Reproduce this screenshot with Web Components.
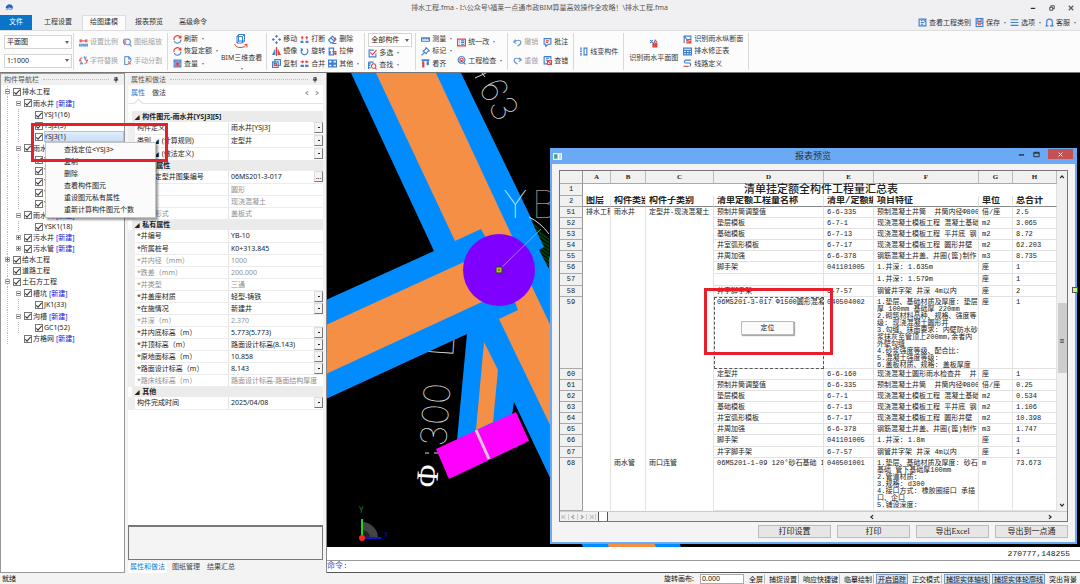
<!DOCTYPE html>
<html lang="zh-CN">
<head>
<meta charset="utf-8">
<title>排水工程.fma</title>
<style>
	html,body{
		margin:0;
		height:100%;
	}
	body{
		font:7px/10px "Noto Sans","Noto Sans CJK SC",sans-serif;
		color:#222;
		background:#f0f0f2;
		overflow:hidden;
	}
</style>
</head>
<body>
<cad-app></cad-app>
<script>
const BASE = `
	*{ box-sizing:border-box; }
	button,input,select{
		font:inherit;
		color:inherit;
		margin:0;
		padding:0;
		border:0;
		border-radius:0;
		background:none;
	}
	button{ white-space:nowrap; }
	select,input[type=checkbox]{ appearance:none; }
	a{ color:#11d; text-decoration:none; }
`;
function define(name,markup,setup){
	const template = document.createElement("template");
	template.innerHTML = markup.replace("<style>","<style>"+BASE);
	customElements.define(name,class extends HTMLElement{
		constructor(){
			super();
			this.attachShadow({mode:"open"}).appendChild(template.content.cloneNode(true));
		}
		connectedCallback(){
			if(setup){
				setup(this,this.shadowRoot);
			}
		}
	});
}

/* ---------- icons ---------- */
const B = 'stroke="#3f7fd0"';
const R = 'stroke="#e0443e"';
const icons = {
	logo:'<path d="M1 9Q2 2 9 2q5 1 5 6l-2 5-1-4-4-1-2 2z" fill="#2b62c4"/><path d="M2 12l5-2 4 2" stroke="#7da9e6"/>',
	scale:`<path d="M2 2v6M14 2v6M2 5h12M5 3l-3 2 3 2M11 3l3 2-3 2" ${R}/><path d="M1 11h14v3H1zM5 11v3M9 11v3M12 11v3" ${B}/>`,
	swap:`<path d="M6 3Q1 3 2 9l2-2M2 9L0 7M10 13q5 0 4-6l-2 2M14 7l2 2" ${R}/><path d="M9 1l2 5 2-5M2 15l2-4 3 4M10 4h3" ${B}/>`,
	zoom:`<path d="M8 2a5 5 0 1 0 .1 10a5 5 0 0 0 0-10M12 11l3 4" ${B}/><path d="M4 1L1 4v5l3 3M3 7h3" ${R}/>`,
	split:`<path d="M3 1h7l4 4v4M3 1v14h6M10 1v4h4" ${B}/><path d="M9 15l5-6M9 9l5 6" ${R}/>`,
	refresh:`<path d="M2 9a6 6 0 0 1 10-6l2 2M14 1v4h-4" ${R}/><path d="M14 8a6 6 0 0 1-10 5l-2-2" ${B}/>`,
	qty:`<path d="M2 2h12v12H2zM2 5h12" ${B}/><path d="M5 7h6v5H5zM8 7v5M5 9h6" ${R}/>`,
	cubeturn:`<path d="M9 3h12v13l-4 4H6V7zM6 7h11v13M17 7l4-4M9 3v13h12M6 20l3-4" ${B}/><path d="M1 22q4 8 13 7 9 0 12-6M26 29v-6h-5" ${R}/>`,
	move:`<path d="M8 1v4M8 11v4M1 8h4M11 8h4M6 3l2-2 2 2M6 13l2 2 2-2M3 6L1 8l2 2M13 6l2 2-2 2" ${B}/>`,
	mirror:`<path d="M6 2v12H0z" fill="#3f7fd0"/><path d="M10 2v12h6z" fill="#e0443e"/><path d="M8 0v16" ${R}/>`,
	copy:`<path d="M5 1h10v10H5z" ${B}/><path d="M1 5h10v10H1z" ${B}/><path d="M4 8h4v4H4z" ${R}/>`,
	brk:`<path d="M4 3v5M12 3v5M2 5l2-2 2 2M10 5l2-2 2 2" ${R}/><path d="M1 10h5v4H1zM10 10h5v4h-5z" fill="#3f7fd0"/>`,
	rotate:`<path d="M4 3a6 6 0 1 0 8 0M4 3H1M4 3v4" ${B}/>`,
	merge:`<path d="M1 5h5M15 5h-5M4 3l2 2-2 2M12 3l-2 2 2 2" ${R}/><path d="M1 10h6v4H1zM9 10h6v4H9z" fill="#3f7fd0"/>`,
	erase:`<path d="M8 2l6 6-6 6H5L1 9zM5 5l6 6" ${B}/><path d="M8 15h7M10 8l4-3" ${R}/>`,
	stretch:`<path d="M2 2h8v12H2zM4 12V7" ${B}/><path d="M8 8h6v6M14 14L8 8" ${R}/>`,
	grid4:`<path d="M1 2h6v5H1zM9 2h6v5H9zM1 9h6v5H1zM9 9h6v5H9z" ${B}/>`,
	multi:`<path d="M14 8v6H2V2h8" ${B}/><path d="M4 6l4 4 7-8" ${R}/>`,
	find:`<path d="M1 2h9M1 5h4M1 8h3M1 12h4M1 2v12" ${B}/><path d="M10 5a4 4 0 1 0 .1 0M13 12l2 3" ${R}/>`,
	ruler:`<path d="M1 5h14v6H1zM4 5v3M7 5v3M10 5v3M13 5v3" ${B}/>`,
	pin:`<path d="M9 1l6 6-3 1-3 4-5-5 4-3zM6 10l-5 5" ${B}/>`,
	align:`<path d="M1 2h14" ${B} stroke-width="3"/><path d="M4 4v11" ${R} stroke-width="4"/><path d="M12 4v7" ${B} stroke-width="4"/>`,
	list:`<path d="M1 2h14v12H1z" ${R}/><path d="M4 5h1M4 8h1M4 11h1M7 5h6M7 8h6M7 11h6" ${B}/>`,
	check:`<path d="M8 1a6 6 0 1 0 .1 0M12 12l3 3" ${B}/><path d="M8 4a3 3 0 1 0 .1 0M8 7v3" ${R}/>`,
	undo:`<path d="M5 3L1 7l5 3M1 7q12-6 13 0 0 5-6 7" ${B}/>`,
	redo:`<path d="M11 3l4 4-5 3M15 7Q3 1 2 7q0 5 6 7" ${B}/>`,
	note:`<path d="M2 1h12v10H9l-4 4v-4H2z" ${B}/><path d="M5 5h6M5 8h4" ${R}/>`,
	wrong:`<path d="M2 1h12v5M2 1v13h5M5 4h6M5 7h3" ${B}/><path d="M8 8h7v7H8zM8 8l7 7" ${R}/>`,
	convert:`<path d="M2 2h3M2 5h3M2 8h3M2 11h3M2 14h3M9 2h5v12H9z" ${B}/>`,
	detect:`<path d="M2 2l5 5M7 2L2 7M10 3v3" ${B}/><path d="M7 7h7v7H7zM7 7l7 7M14 7l-7 7M10 1l4 4" ${R}/>`,
	profile:`<path d="M2 14V2h12v5M2 2l5 6" ${B}/><path d="M7 8h7v6H7zM7 8l7 6" ${R}/>`,
	table:`<path d="M1 2h14v12H1zM1 6h14M1 10h14M6 6v8M11 6v8" ${B}/>`,
	route:`<path d="M14 2H4q-3 3 0 5h8q3 3 0 6" ${B}/><path d="M1 13h9" ${R}/>`,
	doc:`<path d="M2 2h12v12H2zM5 5l3-1M5 8h6M5 11h4M10 4l3 2" ${B}/>`,
	save:`<path d="M2 1h12v14H2zM2 9h12" ${B}/><path d="M5 2v4h6V2M5 12h6" ${R}/>`,
	options:`<path d="M1 3h14M1 8h14M1 13h14" ${B}/>`,
	service:`<path d="M3 12V7q0-5 5-5t5 5v5l1 2H9M3 12l-1 2h4" ${B}/>`,
	tack:'<path d="M5 1h6v7H5zM2 8h12M8 8v7M9 1v7" stroke="#222" stroke-width="2"/>',
	min:'<path d="M2 9h12" stroke="#222" stroke-width="3"/>',
	max:'<path d="M2 3h12v10H2zM2 5h12" stroke="#222" stroke-width="2"/>',
	restore:'<path d="M2 6h8v8H2zM5 6V2h9v8h-4" stroke="#222" stroke-width="2"/>',
	close:'<path d="M2 2l12 12M14 2L2 14" stroke="currentColor" stroke-width="3"/>',
	form:'<path d="M0 2h16v12H0z" fill="#f3f7f3"/><path d="M2 4h6v8H2z" fill="#4c9a86"/><path d="M11 4h3v8h-3z" fill="#b9d2ee"/>',
	up:'<path d="M3 11l5-6 5 6" stroke="#222" stroke-width="3"/>',
	down:'<path d="M3 5l5 6 5-6" stroke="#222" stroke-width="3"/>',
	left:'<path d="M11 3L5 8l6 5" stroke="currentColor" stroke-width="3"/>',
	right:'<path d="M5 3l6 5-6 5" stroke="currentColor" stroke-width="3"/>',
	first:'<path d="M3 3v10M12 3L6 8l6 5" stroke="currentColor" stroke-width="2"/>',
	last:'<path d="M13 3v10M4 3l6 5-6 5" stroke="currentColor" stroke-width="2"/>',
	grip:'<path d="M3 4h10M3 8h10M3 12h10" stroke="#444" stroke-width="2"/>'
};
define("ui-icon",`
	<style>
		:host{
			display:block;
			flex:none;
			width:var(--icon,9px);
			height:var(--icon,9px);
		}
		svg{ display:block; width:100%; height:100%; }
	</style>
	<span></span>
`,(host,root)=>{
	const name = host.getAttribute("name");
	const size = name=="cubeturn" ? 30 : 16;
	root.querySelector("span").innerHTML = `<svg viewBox="0 0 ${size} ${size}" fill="none" stroke-width="2" aria-hidden="true">${icons[name]}</svg>`;
});

/* ---------- ribbon ---------- */
define("tool-button",`
	<style>
		:host{ display:block; }
		button{
			display:flex;
			align-items:center;
			gap:2px;
			line-height:12px;
			color:#333;
		}
		:host([off]) button{ color:#a3a3a3; }
		:host([off]) ui-icon{ opacity:.8; }
		:host([big]) button{
			flex-direction:column;
			gap:4px;
		}
		i{
			display:none;
			border:1px solid transparent;
			border-top:2px solid #777;
			margin:1px 0 0 2px;
		}
		:host([menu]) i{ display:block; }
		:host([big]) i{ margin:0; }
	</style>
	<button type="button"><ui-icon></ui-icon><slot></slot><i></i></button>
`,(host,root)=>{
	const old = root.querySelector("ui-icon");
	const icon = document.createElement("ui-icon");
	icon.setAttribute("name",host.getAttribute("icon"));
	old.replaceWith(icon);
	root.querySelector("button").disabled = host.hasAttribute("off");
});
define("combo-box",`
	<style>
		:host{
			display:flex;
			align-items:center;
			border:1px solid #d5d5d5;
			background:#fff;
		}
		select{
			flex:1;
			min-width:0;
			padding-left:2px;
			height:12px;
			line-height:10px;
		}
		i{
			border:2px solid transparent;
			border-top:3px solid #666;
			margin:2px 2px 0 0;
			pointer-events:none;
		}
	</style>
	<select><option></option></select><i></i>
`,(host,root)=>{
	root.querySelector("option").textContent = host.getAttribute("value");
	root.querySelector("select").setAttribute("aria-label",host.getAttribute("label"));
});
define("rib-group",`
	<style>
		:host{
			display:flex;
			gap:5px;
			padding:0 5px;
			margin:2px 0;
			border-right:1px solid #d9d9d9;
		}
		:host([tight]){ gap:3px; }
		::slotted(div){
			display:flex;
			flex-direction:column;
			justify-content:space-around;
		}
	</style>
	<slot></slot>
`);
define("app-ribbon",`
	<style>
		:host{ display:block; border-bottom:1px solid #777; }
		.title{
			display:grid;
			grid-template-columns:1fr auto 1fr;
			align-items:center;
			height:15px;
			padding:0 6px 0 5px;
			color:#555;
		}
		.win{
			display:flex;
			gap:13px;
			justify-content:flex-end;
			--icon:6px;
		}
		nav{ display:flex; align-items:stretch; height:15px; }
		nav a{
			color:#333;
			padding:2px 8px 0;
		}
		nav a.file{ background:#0a74c9; color:#fff; padding:2px 9px 0; margin-right:4px; }
		nav a.on{ background:#fcfcfc; border:1px solid #ddd; border-bottom:0; padding:1px 7px 0; margin:0 1px 0 2px; }
		.quick{ display:flex; gap:4px; margin-left:auto; padding-right:4px; align-items:center; }
		.bar{
			display:flex;
			height:42px;
			background:#fcfcfc;
			border-top:1px solid #ddd;
		}
		.files{ padding:0 1px 0 4px; }
		.files combo-box{ width:68px; }
		.all{ width:44px; }
		.view{ padding:0 4px 0 5px; }
		.pick{ padding:0 3px; }
		.big{ --icon:15px; }
	</style>
	<div class="title">
		<ui-icon name="logo"></ui-icon>
		<span>排水工程.fma - I:\\公众号\\福莱一点通市政BIM算量高效操作全攻略！\\排水工程.fma</span>
		<div class="win">
			<button type="button" aria-label="最小化"><ui-icon name="min"></ui-icon></button>
			<button type="button" aria-label="还原"><ui-icon name="restore"></ui-icon></button>
			<button type="button" aria-label="关闭"><ui-icon name="close"></ui-icon></button>
		</div>
	</div>
	<nav>
		<a class="file" href="#file">文件</a>
		<a href="#setup">工程设置</a>
		<a class="on" href="#draw">绘图建模</a>
		<a href="#report">报表预览</a>
		<a href="#advanced">高级命令</a>
		<div class="quick">
			<tool-button icon="doc">查看工程类别</tool-button>
			<tool-button icon="save" menu>保存</tool-button>
			<tool-button icon="options" menu>选项</tool-button>
			<tool-button icon="service" menu>客服</tool-button>
		</div>
	</nav>
	<div class="bar">
		<rib-group class="files"><div>
			<combo-box label="图纸" value="平面图"></combo-box>
			<combo-box label="比例" value="1:1000"></combo-box>
		</div></rib-group>
		<rib-group>
			<div><tool-button icon="scale" off>设置比例</tool-button><tool-button icon="swap" off>字符替换</tool-button></div>
			<div><tool-button icon="zoom" off>图纸缩放</tool-button><tool-button icon="split" off>手动分割</tool-button></div>
		</rib-group>
		<rib-group class="view" tight>
			<div>
				<tool-button icon="refresh" menu>刷新</tool-button>
				<tool-button icon="refresh" menu>恢复定额</tool-button>
				<tool-button icon="qty" menu>查量</tool-button>
			</div>
			<div><tool-button class="big" icon="cubeturn" big menu>BIM三维查看</tool-button></div>
		</rib-group>
		<rib-group tight>
			<div><tool-button icon="move">移动</tool-button><tool-button icon="mirror">镜像</tool-button><tool-button icon="copy">复制</tool-button></div>
			<div><tool-button icon="brk">打断</tool-button><tool-button icon="rotate">旋转</tool-button><tool-button icon="merge">合并</tool-button></div>
			<div><tool-button icon="erase">删除</tool-button><tool-button icon="stretch">拉伸</tool-button><tool-button icon="grid4" menu>其他</tool-button></div>
		</rib-group>
		<rib-group class="pick"><div>
			<combo-box class="all" label="构件" value="全部构件"></combo-box>
			<tool-button icon="multi" menu>多选</tool-button>
			<tool-button icon="find" menu>查找</tool-button>
		</div></rib-group>
		<rib-group>
			<div><tool-button icon="ruler" menu>测量</tool-button><tool-button icon="pin" menu>标记</tool-button><tool-button icon="align">看齐</tool-button></div>
			<div><tool-button icon="list" menu>统一改</tool-button><tool-button icon="check" menu>工程检查</tool-button></div>
		</rib-group>
		<rib-group>
			<div><tool-button icon="undo" off>撤销</tool-button><tool-button icon="redo" off>重做</tool-button></div>
			<div><tool-button icon="note">批注</tool-button><tool-button icon="wrong">查错</tool-button></div>
		</rib-group>
		<rib-group><div><tool-button icon="convert">线变构件</tool-button></div></rib-group>
		<rib-group>
			<div><tool-button icon="detect" big>识别雨水平面图</tool-button></div>
			<div><tool-button icon="profile">识别雨水纵断面</tool-button><tool-button icon="table">排水修正表</tool-button><tool-button icon="route">线路定义</tool-button></div>
		</rib-group>
	</div>
`);

/* ---------- docked panels ---------- */
define("dock-header",`
	<style>
		:host{
			display:flex;
			align-items:center;
			gap:4px;
			height:11px;
			padding:0 5px 0 3px;
			color:#555;
			background:#f0f0f0;
			--icon:6px;
		}
		hr{ flex:1; border:0; border-top:1px dotted #bbb; margin:0; }
	</style>
	<slot></slot><hr><ui-icon name="tack"></ui-icon>
`);

// level, text, toggle sign, has a "new" link, selected
const nodes = [
	[0,"排水工程","-"],
	[1,"雨水井","-",1],
	[2,"YSJ1(16)"],[2,"YSJ2(5)"],[2,"YSJ3(1)","",0,1],
	[1,"雨水管","-",1],
	[2,"YSG1(8)"],[2,"YSG2(6)"],[2,"YSG3(4)"],[2,"YSG4(3)"],[2,"YSG5(2)"],
	[1,"雨水口","-",1],
	[2,"YSK1(18)"],
	[1,"污水井","+",1],[1,"污水管","+",1],
	[0,"给水工程","+"],[0,"道路工程"],
	[0,"土石方工程","-"],
	[1,"槽坑","-",1],[2,"JK1(33)"],
	[1,"沟槽","-",1],[2,"GC1(52)"],
	[1,"方格网","",1]
];
define("nav-tree",`
	<style>
		:host{
			display:flex;
			flex-direction:column;
			border:1px solid #999;
			background:#fff;
		}
		ul{ list-style:none; margin:0; padding:1px 0 0 4px; }
		li{
			display:flex;
			align-items:center;
			height:11px;
			padding-left:calc(var(--level)*11px);
			background:repeating-linear-gradient(#bbb 0 1px,transparent 1px 2px) 2px 0/1px 100% no-repeat;
		}
		li.open{ height:12px; }
		li.deep{
			background:
				repeating-linear-gradient(#bbb 0 1px,transparent 1px 2px) 2px 0/1px 100% no-repeat,
				repeating-linear-gradient(#bbb 0 1px,transparent 1px 2px) 13px 0/1px 100% no-repeat;
		}
		button,i{
			width:5px;
			height:5px;
			flex:none;
			margin-right:3px;
		}
		button{
			border:1px solid #aaa;
			background:linear-gradient(#666,#666) center/3px 1px no-repeat #fff;
		}
		button.plus{
			background:linear-gradient(#666,#666) center/3px 1px no-repeat,linear-gradient(#666,#666) center/1px 3px no-repeat #fff;
		}
		label{ display:flex; flex:1; align-items:center; line-height:11px; }
		input{
			width:8px;
			height:8px;
			flex:none;
			margin-right:1px;
			border:1px solid #777;
			background:#fff;
		}
		input:checked::before{
			content:"";
			display:block;
			width:5px;
			height:2px;
			border:solid #333;
			border-width:0 0 1px 1px;
			transform:translate(0,1px) rotate(-48deg);
		}
		a{ margin-left:2px; }
		.sel{ flex:1; background:linear-gradient(#e4effc,#c5dcf8); outline:1px solid #a5c6ee; outline-offset:-1px; }
	</style>
	<dock-header>构件导航栏</dock-header>
	<ul></ul>
`,(host,root)=>{
	root.querySelector("ul").innerHTML = nodes.map(([level,text,sign,add,sel],i)=>`
		<li class="${level==1&&sign=="-"?"open":""} ${level==2?"deep":""}" style="--level:${level}">
			${sign ? `<button type="button" class="${sign=="+"?"plus":""}" aria-label="展开 ${text}"></button>` : "<i></i>"}
			<label for="n${i}"><input type="checkbox" id="n${i}" checked><span class="${sel?"sel":""}">${text}</span>${add ? '<a href="#new">[新建]</a>' : ""}</label>
		</li>`).join("");
});

// h = section, s = drop-down, d = read only, b = browse, t = plain
const props = [
	["h","构件图元-雨水井[YSJ3][5]"],
	["s","构件定义","雨水井[YSJ3]"],
	["s","类别 <small>◢</small> (计算规则)","定型井"],
	["s","做法 <small>◢</small> (做法定义)",""],
	["h","附加属性"],
	["b","*标准定型井图集编号","06MS201-3-017"],
	["d","*形状","圆形"],
	["d","*材质","现浇混凝土"],
	["d","*井盖形式","盖板式"],
	["h","私有属性"],
	["t","*井编号","YB-10"],
	["t","*所属桩号","K0+313.845"],
	["d","*井内径（mm）","1000"],
	["d","*跌差（mm）","200.000"],
	["d","*井类型","三通"],
	["s","*井盖座材质","轻型-铸铁"],
	["s","*在施情况","新建井"],
	["d","*井深（m）","2.370"],
	["s","*井内底标高（m）","5.773(5.773)"],
	["s","*井顶标高（m）","路面设计标高(8.143)"],
	["s","*原地面标高（m）","10.858"],
	["s","*路面设计标高（m）","8.143"],
	["d","*路床线标高（m）","路面设计标高-路面结构厚度"],
	["h","其他"],
	["s","构件完成时间","2025/04/08"]
];
define("prop-panel",`
	<style>
		:host{
			display:flex;
			flex-direction:column;
			background:#f3f3f3;
			padding:1px 3px 0;
		}
		.page{ flex:1; background:#fff; display:flex; flex-direction:column; }
		.tabs{ display:flex; gap:7px; padding:3px 3px 0; height:22px; }
		.tabs a{ color:#333; }
		.tabs a.on,.foot a.on{ color:#1479d0; }
		.tabs span{ display:flex; gap:4px; margin-left:auto; padding-top:2px; color:#999; --icon:6px; }
		.line{ display:flex; border-top:1px solid #e3e3e3; height:4px; margin-top:-4px; }
		.line::before{
			content:"";
			width:6px;
			height:6px;
			margin:-4px 0 0 7px;
			border:solid #ddd;
			border-width:1px 0 0 1px;
			background:#fff;
			transform:rotate(45deg);
		}
		table{ width:100%; border-collapse:collapse; table-layout:fixed; margin-top:4px; }
		col.name{ width:97px; }
		td,th{
			height:12px;
			padding:0 0 0 2px;
			line-height:11px;
			text-align:left;
			font-weight:400;
			white-space:nowrap;
			overflow:hidden;
			border-bottom:1px solid #ececec;
		}
		tbody th{ border-left:7px solid #eee; border-right:1px solid #e6e6e6; }
		th.head{
			height:11px;
			line-height:10px;
			background:#ebebeb;
			border:0;
			font-weight:700;
		}
		small{ font-size:5px; margin:0 1px; }
		.dim *{ color:#8f8f8f; }
		td div{ display:flex; }
		select,input{ flex:1; min-width:0; height:11px; line-height:11px; }
		td button,td i{
			width:9px;
			height:11px;
			line-height:6px;
			background:#f4f4f4;
			border:1px solid #ddd;
			border-right-color:#777;
			border-bottom-color:#777;
		}
		td i::after{
			content:"";
			display:block;
			width:2px;
			height:1px;
			margin:4px 3px;
			background:#222;
		}
		.note{
			height:35px;
			margin-top:auto;
			border:1px solid #777;
			border-top-width:2px;
			background:#f4f4f4;
		}
		.foot{ display:flex; gap:5px; padding-top:2px; height:13px; background:#f3f3f3; }
		.foot a{ color:#444; padding-right:2px; }
		.foot a.on{ background:#fff; padding:0 2px; }
	</style>
	<dock-header>属性和做法</dock-header>
	<div class="page">
		<div class="tabs"><a class="on" href="#prop">属性</a><a href="#way">做法</a><span><ui-icon name="left"></ui-icon><ui-icon name="right"></ui-icon></span></div>
		<div class="line"></div>
		<table><colgroup><col class="name"><col></colgroup><tbody></tbody></table>
		<div class="note"></div>
	</div>
	<div class="foot"><a class="on" href="#p">属性和做法</a><a href="#d">图纸管理</a><a href="#r">结果汇总</a></div>
`,(host,root)=>{
	root.querySelector("tbody").innerHTML = props.map(([kind,name,value],i)=>{
		if(kind=="h"){
			return `<tr><th class="head" colspan="2"><small>◢</small> ${name}</th></tr>`;
		}
		let cell = value;
		if(kind=="s"){
			cell = `<div><select aria-labelledby="p${i}"><option>${value}</option></select><i></i></div>`;
		}
		if(kind=="b"){
			cell = `<div><input aria-labelledby="p${i}" value="${value}"><button type="button">...</button></div>`;
		}
		return `<tr class="${kind=="d"?"dim":""}"><th scope="row" id="p${i}">${name}</th><td>${cell}</td></tr>`;
	}).join("");
});

/* ---------- drawing ---------- */
define("cad-view",`
	<style>
		:host{ display:flex; flex-direction:column; background:#fff; border-left:1px solid #888; }
		.draw{ flex:1; min-height:0; background:#000; overflow:hidden; }
		svg{ display:block; width:100%; height:100%; }
		.cad{ font-family:"Inter","Roboto","Lato",sans-serif; font-weight:100; font-size:38px; }
		.pos{
			padding:1px 10px 0 0;
			height:14px;
			text-align:right;
			font:8px/12px "Liberation Mono",monospace;
			border-bottom:1px solid #999;
		}
		label{
			display:flex;
			height:12px;
			color:#5b3fc4;
			font:8px/10px "Liberation Mono","Noto Sans CJK SC",monospace;
			border-bottom:1px solid #555;
		}
		input{ flex:1; }
	</style>
	<div class="draw">
		<svg viewBox="327 73 753 474" preserveAspectRatio="xMinYMin slice">
			<defs>
				<pattern id="hatch" width="3" height="3" patternUnits="userSpaceOnUse" patternTransform="rotate(35)">
					<rect width="3" height="3" fill="#000"/><path d="M0 1h3" stroke="#0a7a1c"/>
				</pattern>
			</defs>
			<g class="cad" fill="#d8d8d8">
				<text transform="translate(478 87) rotate(62)" font-size="36">63</text>
				<path d="M475 78l11-5M482 73l3 4" stroke="#d8d8d8"/>
				<text transform="translate(453 358) rotate(-86)">L</text>
				<text transform="translate(446 447) rotate(-86)" font-size="36">300</text>
				<path d="M425 453h4M434 453h7" stroke="#d8d8d8"/>
			</g>
			<path d="M351 73H461L545 247 681 547H583L514 402 512 415 457 440 467 334 326 399V300L434 251z" fill="#008cff"/>
			<g fill="#f68f46">
				<path d="M376 73h60l76 163-10 34-15-30-6-11-26 12z"/>
				<path d="M326 325L464 262l40 6-22 34L326 374z"/>
				<path d="M499 319l19-9-12-32 20-4L656 547h-47z"/>
				<path d="M484 342l14 28-5 52-17 8z"/>
			</g>
			<path d="M531 220l18 19v30l-10-19 5-3z" fill="url(#hatch)"/>
			<path d="M529 217q12 6 20 17" stroke="#ddd" fill="none"/>
			<circle cx="499" cy="270" r="36" fill="#7f00ff"/>
			<path d="M499 270l42-41" stroke="#c9a4ff" stroke-width=".7"/>
			<path d="M496 267h6v6h-6z" fill="#8fd420" stroke="#333"/><circle cx="499" cy="270" r="1" fill="#d22"/>
			<g class="cad"><text x="503" y="218" fill="#bfe9ff">Y</text><text x="532" y="218" fill="#a88c80">B</text></g>
			<path d="M436 449l80-37 13 29-80 38z" fill="#f0f"/>
			<path d="M476 430l13 29" stroke="#d9c4dc" stroke-width="3"/>
			<text transform="translate(437 488) rotate(-86)" font-family="Liberation Serif" font-size="31" fill="#fff">Φ</text>
			<path d="M362 538v-16a16 16 0 0 1 16 16z" fill="#444"/>
			<path d="M362 538v-8a8 8 0 0 1 8 8z" fill="#222"/>
			<path d="M362 538v-19" stroke="#1fd41f" stroke-width="2"/>
			<path d="M362 538h19" stroke="#1414d8" stroke-width="2"/>
			<circle cx="362" cy="538" r="3" fill="#f22"/>
			<text x="359" y="513" font-size="8" fill="#0b8a0b">Y</text>
			<text x="384" y="537" font-size="7" fill="#1414b8">X</text>
		</svg>
	</div>
	<div class="pos">270777,148255</div>
	<label>命令:<input></label>
`);

/* ---------- report window ---------- */
const feature59 = `1.垫层、基础材质及厚度: 垫层
厚 100mm 基础厚 220mm
2.砌筑材料品种、规格、强度等
级: 现浇混凝土圆形井
3.勾缝、抹面要求: 内壁防水砂
浆抹灰至管顶上200mm,余者内
外壁勾缝
4.砂浆强度等级、配合比:
5.混凝土强度等级:
6.盖板材质、规格: 盖板厚度`;
const feature68 = `1.垫层、基础材质及厚度: 砂石
基础 管下基础厚100mm
2.管道材质:
3.规格: d300
4.接口方式: 橡胶圈接口 承插
口、企口
5.铺设深度:`;
const form = "现浇混凝土模板工程 ";
const report = [
	[51,"排水工程","雨水井","定型井-现浇混凝土","预制井筒调整值","6-6-335","预制混凝土井筒  井筒内径Φ800","倍/座","2.5"],
	[52,"","","","垫层模板","6-7-1",form+"混凝土基础","m2","3.065"],
	[53,"","","","基础模板","6-7-13",form+"平井底 钢","m2","8.72"],
	[54,"","","","井室弧形模板","6-7-17",form+"圆形井壁","m2","62.203"],
	[55,"","","","井周加强","6-6-378","钢筋混凝土井盖、井圈(篦)制作","m3","8.735"],
	[56,"","","","脚手架","041101005","1.井深: 1.635m","座","1"],
	[57,"","","","","","1.井深: 1.579m","座","1"],
	[58,"","","","井字脚手架","6-7-57","钢管井字架 井深 4m以内","座","2"],
	[59,"","","","06MS201-3-017 Φ1500圆形混凝土","040504002",feature59,"座","1"],
	[60,"","","","定型井","6-6-160","现浇混凝土圆形雨水检查井  井","座","1"],
	[61,"","","","预制井筒调整值","6-6-335","预制混凝土井筒  井筒内径Φ800","倍/座","0.25"],
	[62,"","","","垫层模板","6-7-1",form+"混凝土基础","m2","0.534"],
	[63,"","","","基础模板","6-7-13",form+"平井底 钢","m2","1.106"],
	[64,"","","","井室弧形模板","6-7-17",form+"圆形井壁","m2","10.398"],
	[65,"","","","井周加强","6-6-378","钢筋混凝土井盖、井圈(篦)制作","m3","1.747"],
	[66,"","","","脚手架","041101005","1.井深: 1.8m","座","1"],
	[67,"","","","井字脚手架","6-7-57","钢管井字架 井深 4m以内","座","1"],
	[68,"","雨水管","雨口连管","06MS201-1-09 120°砂石基础 II","040501001",feature68,"m","73.673"]
];
const itemRows = [56,57,66];
define("report-table",`
	<style>
		:host{ display:block; background:#fff; }
		table{
			width:100%;
			table-layout:fixed;
			border-collapse:separate;
			border-spacing:0;
			font:7px/10px "Liberation Mono","Noto Sans CJK SC",monospace;
		}
		th,td{
			height:11px;
			padding:0 0 0 3px;
			text-align:left;
			vertical-align:top;
			white-space:pre;
			overflow:hidden;
			border-right:1px solid #e2e2e2;
		}
		.abc th{
			height:13px;
			padding:0;
			text-align:center;
			vertical-align:middle;
			font-family:"Liberation Serif",serif;
			background:#f1f1f1;
			border-right-color:#bbb;
			border-bottom:1px solid #aaa;
		}
		tr th:first-child{
			padding:0;
			text-align:center;
			font-weight:400;
			font-size:7px;
			background:#f1f1f1;
			border-right:1px solid #999;
			border-bottom:1px solid #aaa;
		}
		.name td{ font-size:11px; line-height:12px; height:12px; text-align:center; font-weight:500; overflow:visible; }
		.cols td{ font:700 9px/10px "Liberation Mono","Noto Sans CJK SC",monospace; border-bottom:1px solid #888; }
		.rows td:nth-child(n+5){ border-bottom:1px solid #e2e2e2; }
		.item > *{ height:12px; }
		.text{ line-height:7px; padding-top:2px; overflow:hidden; }
		.r59 .text{ height:71px; }
		.r68 .text{ height:52px; }
		.rows .r59 td:nth-child(5){ outline:1px dashed #555; outline-offset:-1px; }
	</style>
	<table>
		<colgroup><col width="23"><col width="28"><col width="35"><col width="68"><col width="110"><col width="50"><col><col width="34"><col width="44"></colgroup>
		<thead>
			<tr class="abc"><th></th><th>A</th><th>B</th><th>C</th><th>D</th><th>E</th><th>F</th><th>G</th><th>H</th></tr>
			<tr class="name"><th>1</th><td colspan="8">清单挂定额全构件工程量汇总表</td></tr>
			<tr class="cols"><th>2</th><td>图层</td><td>构件类别</td><td>构件子类别</td><td>清单定额工程量名称</td><td>清单/定额编号</td><td>项目特征</td><td>单位</td><td>总合计</td></tr>
		</thead>
		<tbody class="rows"></tbody>
	</table>
`,(host,root)=>{
	root.querySelector("tbody").innerHTML = report.map(([no,...cells])=>
		`<tr class="r${no} ${itemRows.includes(no)?"item":""}"><th scope="row">${no}</th>${
			cells.map(c=>c.includes("\n") ? `<td><div class="text">${c}</div></td>` : `<td>${c}</td>`).join("")
		}</tr>`).join("");
});
define("report-window",`
	<style>
		:host{
			display:block;
			background:#f4f4f4;
			border:2px solid #6aaaf5;
			border-top:0;
		}
		header{
			display:grid;
			grid-template-columns:1fr auto 1fr;
			align-items:center;
			height:16px;
			padding:0 2px 0 1px;
			background:#6aaaf5;
			font-size:9px;
			color:#234;
		}
		.win{ display:flex; justify-content:flex-end; align-items:center; gap:8px; height:12px; --icon:7px; margin-bottom:4px; }
		.win .x{
			display:grid;
			place-items:center;
			width:25px;
			height:10px;
			background:#c75050;
			color:#fff;
			--icon:5px;
		}
		main{ padding:6px 7px 4px; }
		.sheet{ border:1px solid #777; }
		.view{ display:flex; }
		report-table{ flex:1; min-width:0; }
		.vbar{
			display:flex;
			flex-direction:column;
			justify-content:space-between;
			align-items:center;
			width:10px;
			padding:3px 0;
			--icon:6px;
			background:linear-gradient(#cdcdcd,#cdcdcd) center 132px/9px 70px no-repeat #f0f0f0;
		}
		.hbar{
			display:flex;
			align-items:center;
			height:10px;
			padding-right:14px;
			background:#f0f0f0;
			border-top:1px solid #ccc;
			--icon:6px;
		}
		.hbar .s{ width:9px; padding-left:1px; color:#999; border-right:1px solid #ccc; }
		.hbar .tab{ width:10px; height:9px; margin:0 auto 0 2px; background:#fff; border:1px solid #555; border-width:0 1px; }
		.track{ width:184px; display:flex; justify-content:space-between; }
		footer{ display:flex; justify-content:flex-end; gap:6px; margin-top:3px; }
		footer button{
			width:73px;
			height:13px;
			font:8px/10px "Liberation Serif","Noto Sans CJK SC",serif;
			background:#e6e6e6;
			border:1px solid #bbb;
		}
	</style>
	<header>
		<ui-icon name="form"></ui-icon>
		<span>报表预览</span>
		<div class="win">
			<button type="button" aria-label="最小化"><ui-icon name="min"></ui-icon></button>
			<button type="button" aria-label="最大化"><ui-icon name="max"></ui-icon></button>
			<button type="button" class="x" aria-label="关闭"><ui-icon name="close"></ui-icon></button>
		</div>
	</header>
	<main>
		<div class="sheet">
			<div class="view">
				<report-table></report-table>
				<div class="vbar">
					<button type="button" aria-label="向上"><ui-icon name="up"></ui-icon></button>
					<ui-icon name="grip"></ui-icon>
					<button type="button" aria-label="向下"><ui-icon name="down"></ui-icon></button>
				</div>
			</div>
			<div class="hbar">
				<button type="button" class="s" aria-label="首页"><ui-icon name="first"></ui-icon></button>
				<button type="button" class="s" aria-label="上一页"><ui-icon name="left"></ui-icon></button>
				<button type="button" class="s" aria-label="下一页"><ui-icon name="right"></ui-icon></button>
				<button type="button" class="s" aria-label="末页"><ui-icon name="last"></ui-icon></button>
				<span class="tab"></span>
				<span class="track">
					<button type="button" aria-label="向左"><ui-icon name="left"></ui-icon></button>
					<button type="button" aria-label="向右"><ui-icon name="right"></ui-icon></button>
				</span>
			</div>
		</div>
		<footer>
			<button type="button">打印设置</button>
			<button type="button">打印</button>
			<button type="button">导出Excel</button>
			<button type="button">导出到一点通</button>
		</footer>
	</main>
`);

/* ---------- menu, status bar, shell ---------- */
define("context-menu",`
	<style>
		:host{
			display:flex;
			flex-direction:column;
			padding:1px 0;
			background:#fbfbfb;
			border:1px solid #c4c4c4;
			box-shadow:2px 2px 2px #0006;
		}
	</style>
	<slot></slot>
`);
define("status-bar",`
	<style>
		:host{
			display:flex;
			align-items:center;
			gap:2px;
			height:11px;
			padding:0 1px 0 2px;
			background:#f3f3f3;
			color:#111;
		}
		label{ margin-left:auto; display:flex; gap:6px; }
		input{ width:44px; height:10px; background:#fff; border:1px solid #aaa; margin-right:1px; padding-left:1px; }
		button{
			height:10px;
			line-height:9px;
			padding:0 1px;
			border:1px solid transparent;
			border-right-color:#bbb;
		}
		button[aria-pressed=true]{ background:#d3e2f5; border-color:#7d9cc4; }
		button:last-child{ border-right-color:transparent; }
	</style>
	<span>就绪</span>
	<label>旋转画布: <input value="0.000"></label>
	<button type="button">全屏</button>
	<button type="button">捕捉设置</button>
	<button type="button">响应快捷键</button>
	<button type="button">临摹绘制</button>
	<button type="button" aria-pressed="true">开启追踪</button>
	<button type="button">正交模式</button>
	<button type="button" aria-pressed="true">捕捉实体轴线</button>
	<button type="button" aria-pressed="true">捕捉实体轮廓线</button>
	<button type="button">突出背景</button>
`);
define("cad-app",`
	<style>
		:host{ display:flex; flex-direction:column; height:100vh; }
		.work{ flex:1; min-height:0; display:flex; position:relative; }
		nav-tree{ width:125px; }
		prop-panel{ width:201px; }
		cad-view{ flex:1; min-width:0; }
		report-window{ position:absolute; left:550px; right:3px; top:75px; }
		.menu{ position:absolute; left:45px; top:69px; width:111px; }
		.menu button{ line-height:12px; padding:0 18px; text-align:left; }
		.locate{
			position:absolute;
			left:741px;
			top:248px;
			width:53px;
			height:14px;
			background:#fbfbfb;
			border:1px solid #bbb;
			box-shadow:1px 1px 1px #0005;
		}
		.mark{ position:absolute; border:3px solid #e5202b; pointer-events:none; }
		.m1{ left:31px; top:50px; width:137px; height:39px; }
		.m2{ left:704px; top:215px; width:129px; height:67px; }
		.grip{ position:absolute; right:2px; top:214px; width:6px; height:6px; background:#c7ee8d; border:1px solid #555; }
	</style>
	<app-ribbon></app-ribbon>
	<div class="work">
		<nav-tree></nav-tree>
		<prop-panel></prop-panel>
		<cad-view></cad-view>
		<report-window></report-window>
		<context-menu class="menu">
			<button type="button">查找定位&lt;YSJ3&gt;</button>
			<button type="button">复制</button>
			<button type="button">删除</button>
			<button type="button">查看构件图元</button>
			<button type="button">重设图元私有属性</button>
			<button type="button">重新计算构件图元个数</button>
		</context-menu>
		<button type="button" class="locate">定位</button>
		<div class="mark m1"></div>
		<div class="mark m2"></div>
		<div class="grip"></div>
	</div>
	<status-bar></status-bar>
`);
</script>
</body>
</html>
